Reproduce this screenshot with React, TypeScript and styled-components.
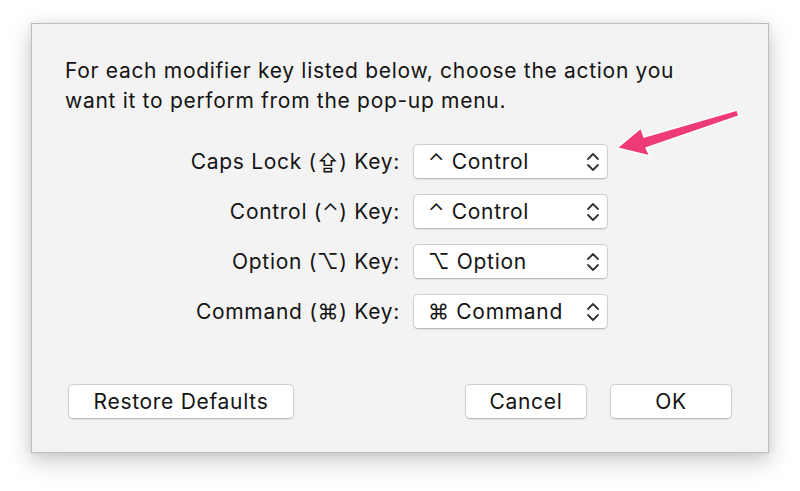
import styled, { createGlobalStyle } from 'styled-components';

const GlobalStyle = createGlobalStyle`
	html, body {
		margin: 0;
		padding: 0;
		background: #ffffff;
	}
	body {
		font-family: Inter, "Liberation Sans", "DejaVu Sans", sans-serif;
		color: #141414;
	}
`;

const Page = styled.div`
	position: relative;
	width: 800px;
	height: 491px;
	padding: 23px 0 0 31px;
	box-sizing: border-box;
`;

const Dialog = styled.div`
	width: 738px;
	height: 430px;
	box-sizing: border-box;
	background: #f3f3f3;
	border: 1px solid #bdbdbd;
	box-shadow: 0 8px 22px rgba(0, 0, 0, 0.22), 0 0 6px rgba(0, 0, 0, 0.08);
	padding: 32px 36px 33px 33px;
	display: flex;
	flex-direction: column;
`;

const Intro = styled.p`
	margin: 0;
	font-size: 21px;
	line-height: 30px;
	letter-spacing: 0.7px;
`;

const Form = styled.div`
	display: grid;
	grid-template-columns: 335px 195px;
	column-gap: 13px;
	row-gap: 15px;
	margin-top: 28px;
	align-items: center;
`;

const Label = styled.span`
	text-align: right;
	font-size: 21px;
	letter-spacing: 0.7px;
`;

const Popup = styled.div`
	height: 35px;
	box-sizing: border-box;
	background: #ffffff;
	border: 1px solid #cfcfcf;
	border-bottom-color: #bcbcbc;
	border-radius: 5px;
	box-shadow: 0 1px 1px rgba(0, 0, 0, 0.08);
	display: flex;
	align-items: center;
	padding: 0 6px 0 14px;
	font-size: 21px;
	letter-spacing: 0.7px;
`;

const PopupText = styled.span`
	flex: 1;
	white-space: pre;
`;

const Footer = styled.div`
	margin-top: auto;
	display: flex;
	align-items: center;
	gap: 23px;
	padding-left: 3px;
`;

const Button = styled.button<{ $width: number }>`
	width: ${(p) => p.$width}px;
	height: 35px;
	background: #ffffff;
	border: 1px solid #cfcfcf;
	border-bottom-color: #b9b9b9;
	border-radius: 5px;
	box-shadow: 0 1px 1px rgba(0, 0, 0, 0.08);
	font-family: inherit;
	font-size: 21px;
	letter-spacing: 0.7px;
	color: #141414;
	padding: 0;
	&:first-child {
		margin-right: auto;
	}
`;

const Arrow = styled.svg`
	position: absolute;
	left: 0;
	top: 0;
	pointer-events: none;
`;

function Stepper() {
	return (
		<svg width="16" height="24" viewBox="0 0 16 24">
			<path d="M3 9 L8 4 L13 9" fill="none" stroke="#333" strokeWidth="1.8" strokeLinecap="round" strokeLinejoin="round" />
			<path d="M3 15 L8 20 L13 15" fill="none" stroke="#333" strokeWidth="1.8" strokeLinecap="round" strokeLinejoin="round" />
		</svg>
	);
}

const rows = [
	{ label: 'Caps Lock (⇪) Key:', value: '⌃ Control' },
	{ label: 'Control (⌃) Key:', value: '⌃ Control' },
	{ label: 'Option (⌥) Key:', value: '⌥ Option' },
	{ label: 'Command (⌘) Key:', value: '⌘ Command' },
];

export default function App() {
	return (
		<>
			<GlobalStyle />
			<Page>
				<Dialog>
					<Intro>
						For each modifier key listed below, choose the action you
						<br />
						want it to perform from the pop-up menu.
					</Intro>
					<Form>
						{rows.map((r) => (
							<>
								<Label key={r.label + 'l'}>{r.label}</Label>
								<Popup key={r.label + 'p'}>
									<PopupText>{r.value}</PopupText>
									<Stepper />
								</Popup>
							</>
						))}
					</Form>
					<Footer>
						<Button $width={226}>Restore Defaults</Button>
						<Button $width={122}>Cancel</Button>
						<Button $width={122}>OK</Button>
					</Footer>
				</Dialog>
				<Arrow width="800" height="491" viewBox="0 0 800 491">
					<polygon
						points="617,148 641,128 644,137 737,110 739,116 646,148 650,156"
						fill="#ef3a78"
						stroke="#ffffff"
						strokeWidth="1.5"
						strokeLinejoin="round"
					/>
				</Arrow>
			</Page>
		</>
	);
}
